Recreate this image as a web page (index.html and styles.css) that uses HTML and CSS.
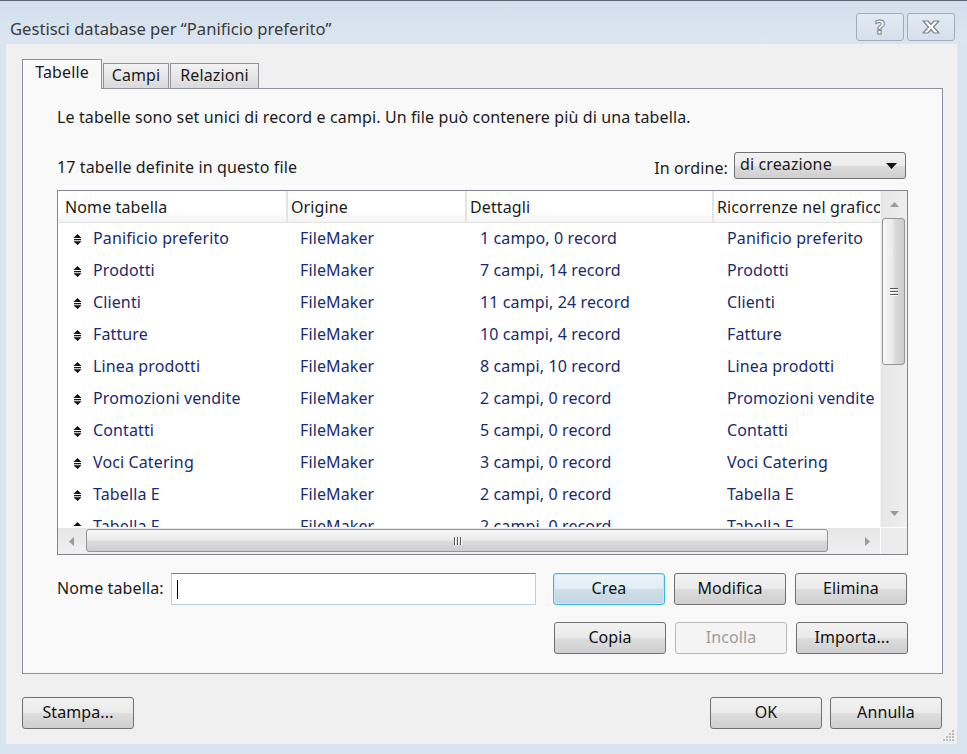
FILE: index.html
```html
<!DOCTYPE html>
<html lang="it">
<head>
<meta charset="utf-8">
<title>Gestisci database</title>
<link rel="stylesheet" href="styles.css">
</head>
<body>
<div class="window">
  <div class="titlebar">
    <div class="title">Gestisci database per “Panificio preferito”</div>
    <div class="caption-btns">
      <div class="cap-btn"><span class="qmark">?</span></div>
      <div class="cap-btn">
        <svg width="22" height="16" viewBox="0 0 22 16"><path d="M3 2 L8 2 L11 5.5 L14 2 L19 2 L13.5 8 L19 14 L14 14 L11 10.5 L8 14 L3 14 L8.5 8 Z" fill="#ffffff" stroke="#7d848c" stroke-width="1.2" stroke-linejoin="round"/></svg>
      </div>
    </div>
  </div>
  <div class="client">
    <div class="tabs">
      <div class="tab active">Tabelle</div>
      <div class="tab tab-campi">Campi</div>
      <div class="tab tab-rel">Relazioni</div>
    </div>
    <div class="panel">
      <p class="desc">Le tabelle sono set unici di record e campi. Un file può contenere più di una tabella.</p>
      <div class="count-row">
        <span>17 tabelle definite in questo file</span>
        <div class="order">
          <span>In ordine:</span>
          <div class="select"><span>di creazione</span><svg width="11" height="6" viewBox="0 0 11 6"><path d="M0 0 H11 L5.5 6 Z" fill="#111"/></svg></div>
        </div>
      </div>
      <div class="list">
        <div class="list-top">
          <div class="list-main">
            <div class="lrow header">
              <div class="hcell">Nome tabella</div>
              <div class="hcell">Origine</div>
              <div class="hcell">Dettagli</div>
              <div class="hcell">Ricorrenze nel grafico</div>
            </div>
            <div class="lrow item"><div class="c1"><svg class="ico" width="9" height="11" viewBox="0 0 9 11"><path d="M4.5 0 L8.5 4 H0.5 Z M1 5 H8 V6.3 H1 Z M0.5 7.2 H8.5 L4.5 11 Z" fill="#111"/></svg>Panificio preferito</div><div class="c2">FileMaker</div><div class="c3">1 campo, 0 record</div><div class="c4">Panificio preferito</div></div>
            <div class="lrow item"><div class="c1"><svg class="ico" width="9" height="11" viewBox="0 0 9 11"><path d="M4.5 0 L8.5 4 H0.5 Z M1 5 H8 V6.3 H1 Z M0.5 7.2 H8.5 L4.5 11 Z" fill="#111"/></svg>Prodotti</div><div class="c2">FileMaker</div><div class="c3">7 campi, 14 record</div><div class="c4">Prodotti</div></div>
            <div class="lrow item"><div class="c1"><svg class="ico" width="9" height="11" viewBox="0 0 9 11"><path d="M4.5 0 L8.5 4 H0.5 Z M1 5 H8 V6.3 H1 Z M0.5 7.2 H8.5 L4.5 11 Z" fill="#111"/></svg>Clienti</div><div class="c2">FileMaker</div><div class="c3">11 campi, 24 record</div><div class="c4">Clienti</div></div>
            <div class="lrow item"><div class="c1"><svg class="ico" width="9" height="11" viewBox="0 0 9 11"><path d="M4.5 0 L8.5 4 H0.5 Z M1 5 H8 V6.3 H1 Z M0.5 7.2 H8.5 L4.5 11 Z" fill="#111"/></svg>Fatture</div><div class="c2">FileMaker</div><div class="c3">10 campi, 4 record</div><div class="c4">Fatture</div></div>
            <div class="lrow item"><div class="c1"><svg class="ico" width="9" height="11" viewBox="0 0 9 11"><path d="M4.5 0 L8.5 4 H0.5 Z M1 5 H8 V6.3 H1 Z M0.5 7.2 H8.5 L4.5 11 Z" fill="#111"/></svg>Linea prodotti</div><div class="c2">FileMaker</div><div class="c3">8 campi, 10 record</div><div class="c4">Linea prodotti</div></div>
            <div class="lrow item"><div class="c1"><svg class="ico" width="9" height="11" viewBox="0 0 9 11"><path d="M4.5 0 L8.5 4 H0.5 Z M1 5 H8 V6.3 H1 Z M0.5 7.2 H8.5 L4.5 11 Z" fill="#111"/></svg>Promozioni vendite</div><div class="c2">FileMaker</div><div class="c3">2 campi, 0 record</div><div class="c4">Promozioni vendite</div></div>
            <div class="lrow item"><div class="c1"><svg class="ico" width="9" height="11" viewBox="0 0 9 11"><path d="M4.5 0 L8.5 4 H0.5 Z M1 5 H8 V6.3 H1 Z M0.5 7.2 H8.5 L4.5 11 Z" fill="#111"/></svg>Contatti</div><div class="c2">FileMaker</div><div class="c3">5 campi, 0 record</div><div class="c4">Contatti</div></div>
            <div class="lrow item"><div class="c1"><svg class="ico" width="9" height="11" viewBox="0 0 9 11"><path d="M4.5 0 L8.5 4 H0.5 Z M1 5 H8 V6.3 H1 Z M0.5 7.2 H8.5 L4.5 11 Z" fill="#111"/></svg>Voci Catering</div><div class="c2">FileMaker</div><div class="c3">3 campi, 0 record</div><div class="c4">Voci Catering</div></div>
            <div class="lrow item"><div class="c1"><svg class="ico" width="9" height="11" viewBox="0 0 9 11"><path d="M4.5 0 L8.5 4 H0.5 Z M1 5 H8 V6.3 H1 Z M0.5 7.2 H8.5 L4.5 11 Z" fill="#111"/></svg>Tabella E</div><div class="c2">FileMaker</div><div class="c3">2 campi, 0 record</div><div class="c4">Tabella E</div></div>
            <div class="lrow item"><div class="c1"><svg class="ico" width="9" height="11" viewBox="0 0 9 11"><path d="M4.5 0 L8.5 4 H0.5 Z M1 5 H8 V6.3 H1 Z M0.5 7.2 H8.5 L4.5 11 Z" fill="#111"/></svg>Tabella F</div><div class="c2">FileMaker</div><div class="c3">2 campi, 0 record</div><div class="c4">Tabella F</div></div>
          </div>
          <div class="vscroll">
            <div class="arrow-btn"><svg width="9" height="5" viewBox="0 0 9 5"><path d="M0 5 L4.5 0 L9 5 Z" fill="#9a9a9a"/></svg></div>
            <div class="vtrack">
              <div class="vthumb"><span class="grip-h"></span><span class="grip-h"></span><span class="grip-h"></span></div>
            </div>
            <div class="arrow-btn"><svg width="9" height="5" viewBox="0 0 9 5"><path d="M0 0 L9 0 L4.5 5 Z" fill="#9a9a9a"/></svg></div>
          </div>
        </div>
        <div class="hscroll-row">
          <div class="hscroll">
            <div class="harrow"><svg width="5" height="9" viewBox="0 0 5 9"><path d="M5 0 L5 9 L0 4.5 Z" fill="#9a9a9a"/></svg></div>
            <div class="hthumb"><span class="grip-v"></span><span class="grip-v"></span><span class="grip-v"></span></div>
            <div class="harrow"><svg width="5" height="9" viewBox="0 0 5 9"><path d="M0 0 L0 9 L5 4.5 Z" fill="#9a9a9a"/></svg></div>
          </div>
          <div class="corner"></div>
        </div>
      </div>
      <div class="name-row">
        <label class="name-label">Nome tabella:</label>
        <div class="input"><span class="caret"></span></div>
        <div class="btn-group">
          <button class="btn default">Crea</button>
          <button class="btn">Modifica</button>
          <button class="btn">Elimina</button>
        </div>
      </div>
      <div class="btn-row2">
        <button class="btn">Copia</button>
        <button class="btn disabled">Incolla</button>
        <button class="btn">Importa...</button>
      </div>
    </div>
    <div class="bottom-row">
      <button class="btn">Stampa...</button>
      <div class="bottom-right">
        <button class="btn">OK</button>
        <button class="btn">Annulla</button>
      </div>
    </div>
    <svg class="resize-grip" width="12" height="12" viewBox="0 0 12 12">
      <g fill="#b9bec6">
        <rect x="9" y="1" width="2" height="2"/>
        <rect x="6" y="4" width="2" height="2"/><rect x="9" y="4" width="2" height="2"/>
        <rect x="3" y="7" width="2" height="2"/><rect x="6" y="7" width="2" height="2"/><rect x="9" y="7" width="2" height="2"/>
        <rect x="0" y="10" width="2" height="2"/><rect x="3" y="10" width="2" height="2"/><rect x="6" y="10" width="2" height="2"/><rect x="9" y="10" width="2" height="2"/>
      </g>
    </svg>
  </div>
</div>
</body>
</html>
```

FILE: styles.css
```css
* { box-sizing: border-box; }
html, body { margin: 0; padding: 0; }
body {
  width: 967px;
  height: 754px;
  overflow: hidden;
  font-family: "Noto Sans", "Open Sans", sans-serif;
  font-size: 16px;
  letter-spacing: 0.12px;
  color: #1b1b1b;
  background: #d9e4f1;
}
.window {
  width: 967px;
  height: 754px;
  border-top: 1px solid #5d6670;
  background: #d9e4f1;
  display: flex;
  flex-direction: column;
}
.titlebar {
  height: 43px;
  display: flex;
  justify-content: space-between;
  align-items: flex-start;
  background: linear-gradient(#d3dfec, #dbe6f2);
}
.title {
  margin-top: 18px;
  margin-left: 10px;
  font-size: 16.6px;
  line-height: 20px;
  letter-spacing: 0;
  color: #3a3a3a;
}
.caption-btns {
  display: flex;
  gap: 3px;
  margin-top: 12px;
  margin-right: 12px;
}
.cap-btn {
  width: 48px;
  height: 28px;
  border: 1px solid #9fadbd;
  border-radius: 3px;
  background: linear-gradient(#e2eaf3, #d6e0ec);
  display: flex;
  align-items: center;
  justify-content: center;
}
.qmark {
  font-family: "DejaVu Sans", sans-serif;
  font-weight: bold;
  font-size: 19px;
  line-height: 20px;
  color: #ffffff;
  -webkit-text-stroke: 1px #7d848c;
}
.client {
  position: relative;
  margin: 0 10px 0 6px;
  height: 700px;
  background: #f0f0f0;
  padding: 15px 14px 0 16px;
}
.tabs {
  display: flex;
  align-items: flex-end;
  height: 30px;
  gap: 1px;
}
.tab {
  height: 26px;
  border: 1px solid #8f929a;
  background: linear-gradient(#f3f3f3, #dadada);
  display: flex;
  align-items: center;
  justify-content: center;
  line-height: 20px;
  padding-bottom: 2px;
}
.tab.active {
  position: relative;
  z-index: 1;
  height: 30px;
  width: 80px;
  border-bottom: none;
  background: #f9f9f9;
  padding-bottom: 5px;
}
.tab-campi { width: 66px; }
.tab-rel { width: 89px; }
.panel {
  margin-top: -1px;
  height: 586px;
  border: 1px solid #8f929a;
  background: #f9f9f9;
  padding: 0 34px 0 34px;
}
.desc {
  margin: 18px 0 0 0;
  line-height: 20px;
}
.count-row {
  margin-top: 25px;
  height: 27px;
  display: flex;
  justify-content: space-between;
  align-items: center;
}
.count-row > span { padding-top: 3px; }
.order {
  display: flex;
  align-items: center;
  gap: 6px;
  margin-right: 2px;
}
.order > span { padding-top: 5px; }
.select {
  width: 172px;
  height: 27px;
  border: 1px solid #707070;
  border-radius: 3px;
  background: linear-gradient(#f2f2f2 0%, #ebebeb 50%, #dddddd 51%, #cfcfcf 100%);
  display: flex;
  align-items: center;
  justify-content: space-between;
  padding: 0 8px 3px 5px;
}
.select svg { margin-top: 3px; }
.list {
  margin-top: 11px;
  width: 851px;
  height: 365px;
  border: 1px solid #828790;
  background: #ffffff;
  display: flex;
  flex-direction: column;
}
.list-top {
  display: flex;
  height: 336px;
}
.list-main {
  flex: 1;
  overflow: hidden;
}
.lrow {
  display: grid;
  grid-template-columns: 230px 179px 247px 1fr;
  white-space: nowrap;
}
.header {
  height: 32px;
  background: linear-gradient(#ffffff 0%, #ffffff 60%, #f4f4f4 100%);
  border-bottom: 1px solid #e3e3e3;
}
.hcell {
  overflow: hidden;
  border-right: 2px solid #e4e4e4;
  padding: 6px 0 0 7px;
  line-height: 20px;
}
.hcell:nth-child(2) { padding-left: 3px; }
.hcell:nth-child(3) { padding-left: 3px; }
.hcell:nth-child(4) { padding-left: 3px; border-right: none; }
.item {
  height: 32px;
  align-items: center;
  color: #1a2a70;
}
.item > div { line-height: 20px; padding-bottom: 3px; overflow: hidden; }
.c1 {
  display: flex;
  align-items: center;
  padding-left: 15px;
}
.ico { margin-right: 11px; flex: none; margin-top: 3px; }
.c2 { padding-left: 12px; }
.c3 { padding-left: 13px; }
.c4 { padding-left: 13px; }
.vscroll {
  width: 27px;
  display: flex;
  flex-direction: column;
  background: linear-gradient(to right, #e6e6e6, #f0f0f0);
  border-left: 1px solid #f4f4f4;
}
.arrow-btn {
  height: 27px;
  display: flex;
  align-items: center;
  justify-content: center;
}
.vtrack {
  flex: 1;
  padding: 0 2px 0 1px;
}
.vthumb {
  height: 147px;
  border: 1px solid #959595;
  border-radius: 3px;
  background: linear-gradient(to right, #f7f7f7 0%, #ececec 45%, #dcdcdc 55%, #cdcdcd 100%);
  display: flex;
  flex-direction: column;
  align-items: center;
  justify-content: center;
  gap: 2px;
}
.grip-h {
  display: block;
  width: 8px;
  height: 1px;
  background: #5a5a5a;
  box-shadow: 0 1px 0 #ffffff;
}
.hscroll-row {
  display: flex;
  height: 27px;
  border-top: 1px solid #ffffff;
}
.hscroll {
  flex: 1;
  display: flex;
  align-items: stretch;
  background: linear-gradient(#e6e6e6, #f0f0f0);
}
.harrow {
  width: 27px;
  display: flex;
  align-items: center;
  justify-content: center;
}
.hthumb {
  flex: 1;
  margin: 1px 26px 2px 1px;
  border: 1px solid #959595;
  border-radius: 3px;
  background: linear-gradient(#f7f7f7 0%, #ececec 45%, #dcdcdc 55%, #cdcdcd 100%);
  display: flex;
  align-items: center;
  justify-content: center;
  gap: 2px;
}
.hthumb + .harrow { width: 26px; }
.grip-v {
  display: block;
  width: 1px;
  height: 8px;
  background: #5a5a5a;
  box-shadow: 1px 0 0 #ffffff;
}
.corner {
  width: 27px;
  background: #ececec;
  border-left: 1px solid #ffffff;
}
.name-row {
  margin-top: 18px;
  display: flex;
  align-items: center;
  height: 32px;
}
.name-label {
  width: 114px;
  padding-bottom: 2px;
}
.input {
  width: 365px;
  height: 32px;
  border: 1px solid #b5cfe7;
  border-top-color: #5d86b3;
  background: #ffffff;
  padding: 6px 0 0 5px;
}
.caret {
  display: block;
  width: 1px;
  height: 19px;
  background: #000000;
}
.btn-group {
  margin-left: 17px;
  display: flex;
  gap: 9px;
}
.btn {
  width: 112px;
  height: 32px;
  border: 1px solid #707070;
  border-radius: 3px;
  background: linear-gradient(#f2f2f2 0%, #ebebeb 48%, #dddddd 52%, #cfcfcf 100%);
  font-family: "Noto Sans", "Open Sans", sans-serif;
  font-size: 16px;
  letter-spacing: 0.1px;
  color: #111111;
  padding: 0 0 3px 0;
  margin: 0;
  line-height: 20px;
}
.btn.default {
  border-color: #3db5e6;
  background: linear-gradient(#eef5fa 0%, #e1ecf4 48%, #cfdee9 52%, #c3d5e2 100%);
  box-shadow: inset 0 0 0 1px #c6eaf8;
}
.btn.disabled {
  border-color: #b9b9b9;
  background: #f4f4f4;
  color: #9d9d9d;
}
.btn-row2 {
  margin-top: 17px;
  display: flex;
  justify-content: flex-end;
  gap: 9px;
  width: 851px;
}
.bottom-row {
  margin-top: 23px;
  display: flex;
  justify-content: space-between;
  padding-right: 1px;
}
.bottom-right {
  display: flex;
  gap: 8px;
}
.resize-grip {
  position: absolute;
  right: 2px;
  bottom: 3px;
}
```
